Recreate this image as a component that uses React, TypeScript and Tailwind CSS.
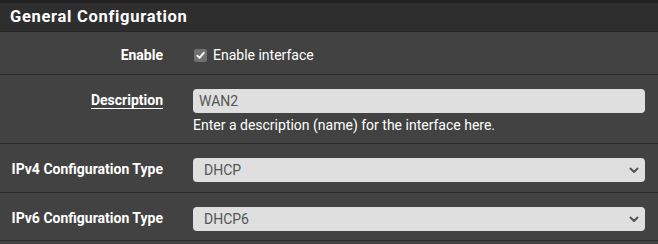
const font = { fontFamily: "Roboto, 'Liberation Sans', sans-serif" };

const Chevron = () => (
  <svg className="w-[10px] h-[7px] text-[#555]" viewBox="0 0 10 7" fill="none" stroke="currentColor">
    <path d="M1.5 1.5l3.5 3.5 3.5-3.5" strokeWidth={2} strokeLinecap="round" strokeLinejoin="round" />
  </svg>
);

const Select = ({ value }: { value: string }) => (
  <div className="flex items-center justify-between h-6 w-[452px] rounded bg-[#dfdfdf] pl-[11px] pr-[6px] text-[14px] text-[#555]">
    <span>{value}</span>
    <Chevron />
  </div>
);

const App = () => {
  return (
    <div className="w-[658px] h-[244px] bg-[#424242] text-white" style={font}>
      {/* Header */}
      <div className="h-[32px] border-t-[3px] border-[#222] bg-[#2e2e2e] border-b border-b-[#262626] px-[10px] flex items-center">
        <h2 className="text-[16.5px] font-bold tracking-[0.7px] leading-none">General Configuration</h2>
      </div>

      {/* Enable */}
      <div className="flex h-[43px] border-b border-[#2b2b2b] items-center pt-[4px]">
        <div className="w-[163px] text-right text-[14px] font-bold">Enable</div>
        <label className="ml-[31px] flex items-center gap-[6px] text-[14px]">
          <span className="w-[13px] h-[13px] rounded-[2px] bg-[#707070] flex items-center justify-center">
            <svg className="w-[9px] h-[9px]" viewBox="0 0 10 10" fill="none" stroke="white">
              <path d="M1.5 5.2l2.4 2.4L8.6 2" strokeWidth={2} strokeLinecap="round" strokeLinejoin="round" />
            </svg>
          </span>
          Enable interface
        </label>
      </div>

      {/* Description */}
      <div className="flex h-[69px] border-b border-[#2b2b2b] pt-[14px]">
        <div className="w-[163px] text-right text-[14px] font-bold pt-[1px]">
          <span className="underline underline-offset-[3px]">Description</span>
        </div>
        <div className="ml-[30px]">
          <div className="h-6 w-[452px] rounded bg-[#dfdfdf] px-[6px] flex items-center text-[14px] text-[#555]">
            WAN2
          </div>
          <p className="mt-[2px] text-[14px] text-white">Enter a description (name) for the interface here.</p>
        </div>
      </div>

      {/* IPv4 */}
      <div className="flex h-[49px] border-b border-[#2b2b2b] pt-[14px]">
        <div className="w-[163px] whitespace-nowrap text-right text-[14px] font-bold pt-[1px]">IPv4 Configuration Type</div>
        <div className="ml-[30px]">
          <Select value="DHCP" />
        </div>
      </div>

      {/* IPv6 */}
      <div className="flex h-[48px] border-b border-[#2b2b2b] pt-[14px]">
        <div className="w-[163px] whitespace-nowrap text-right text-[14px] font-bold pt-[1px]">IPv6 Configuration Type</div>
        <div className="ml-[30px]">
          <Select value="DHCP6" />
        </div>
      </div>
    </div>
  );
};

export default App;
